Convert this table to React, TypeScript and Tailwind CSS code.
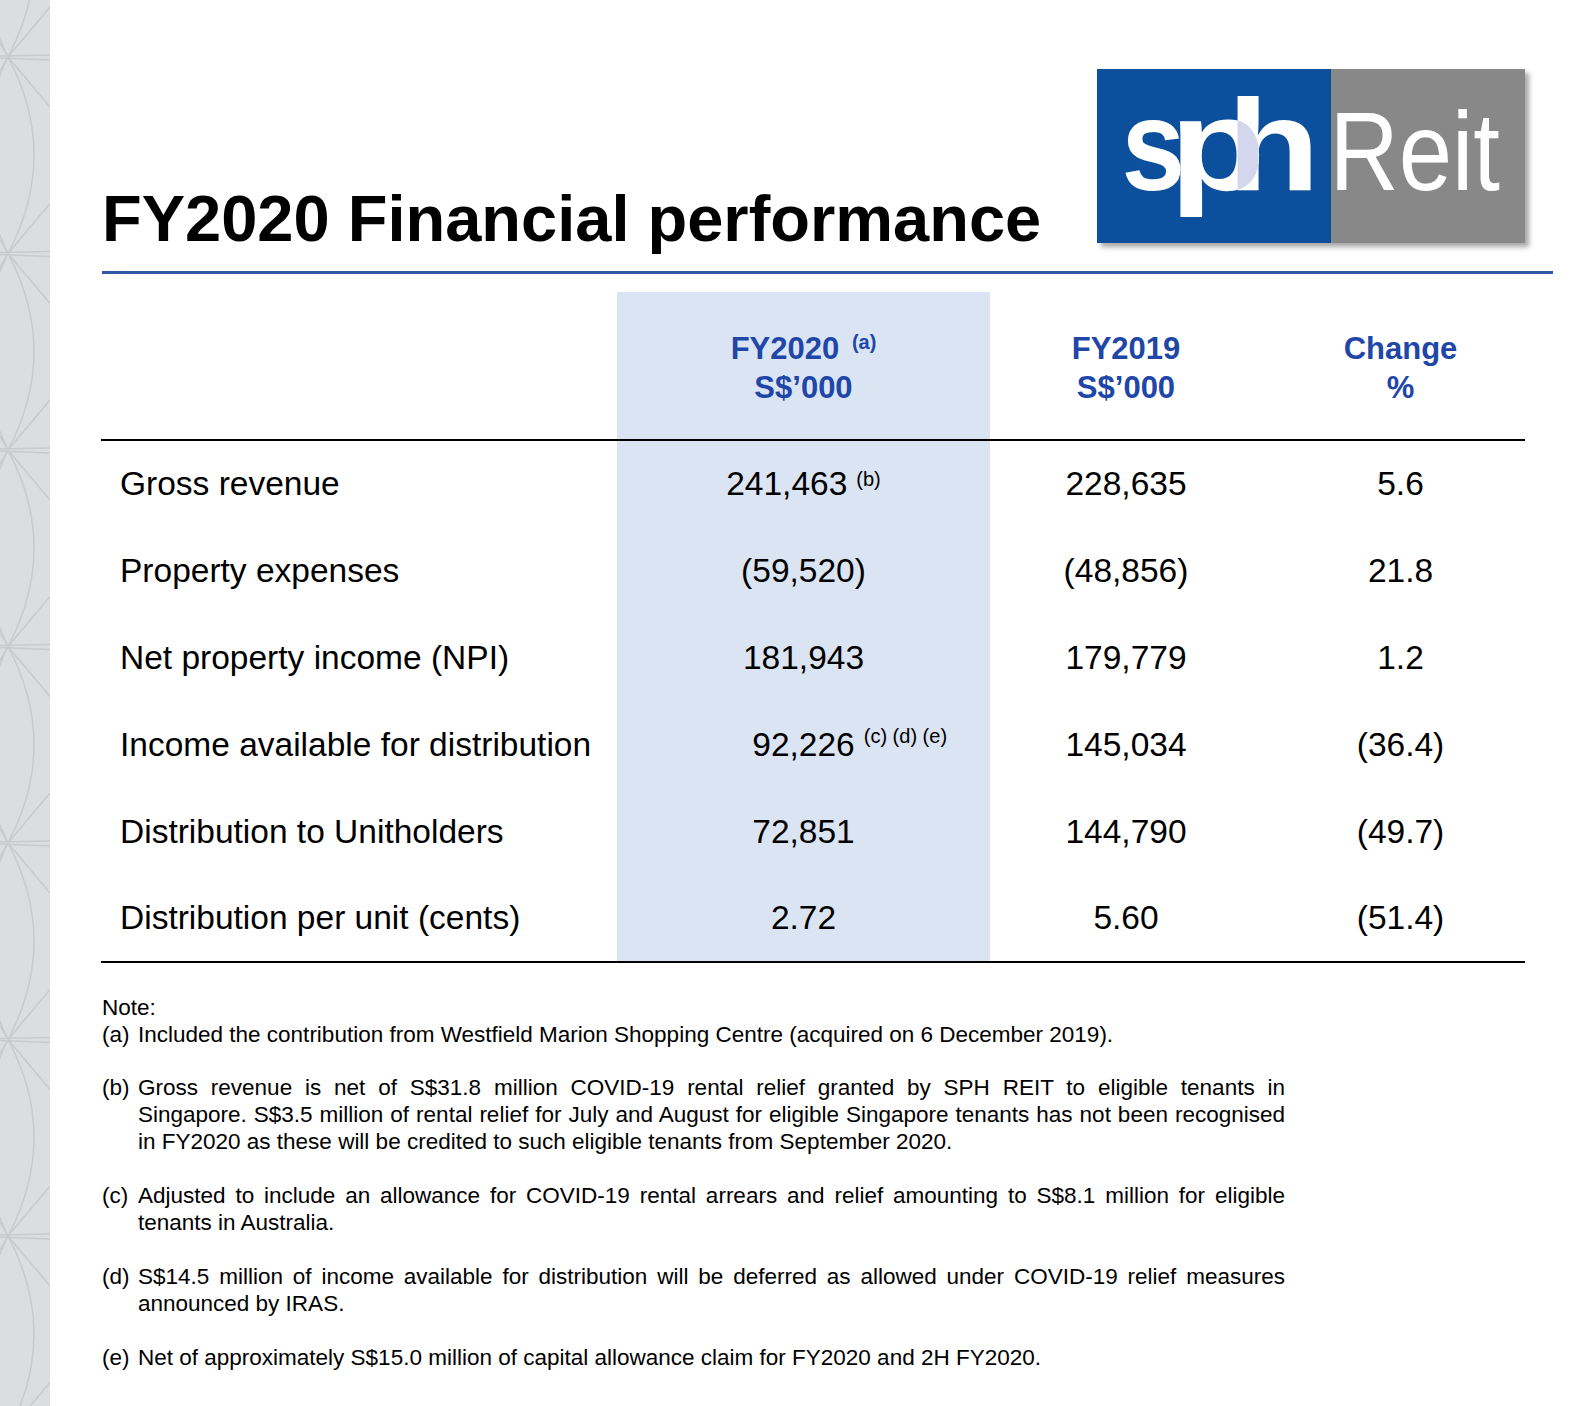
import React from "react";

const FONT = "font-['Liberation_Sans',Arial,sans-serif]";

type Row = {
  label: string;
  fy20: string;
  sup?: string;
  floatSup?: boolean;
  fy19: string;
  change: string;
};

const ROWS: Row[] = [
  { label: "Gross revenue", fy20: "241,463", sup: "(b)", fy19: "228,635", change: "5.6" },
  { label: "Property expenses", fy20: "(59,520)", fy19: "(48,856)", change: "21.8" },
  { label: "Net property income (NPI)", fy20: "181,943", fy19: "179,779", change: "1.2" },
  { label: "Income available for distribution", fy20: "92,226", sup: "(c) (d) (e)", floatSup: true, fy19: "145,034", change: "(36.4)" },
  { label: "Distribution to Unitholders", fy20: "72,851", fy19: "144,790", change: "(49.7)" },
  { label: "Distribution per unit (cents)", fy20: "2.72", fy19: "5.60", change: "(51.4)" },
];

// each note: label + lines (all lines but the last are justified full width)
const NOTES: { tag: string; lines: string[]; gap: string }[] = [
  { tag: "(a)", lines: ["Included the contribution from Westfield Marion Shopping Centre (acquired on 6 December 2019)."], gap: "" },
  {
    tag: "(b)",
    lines: [
      "Gross revenue is net of S$31.8 million COVID-19 rental relief granted by SPH REIT to eligible tenants in",
      "Singapore. S$3.5 million of rental relief for July and August for eligible Singapore tenants has not been recognised",
      "in FY2020 as these will be credited to such eligible tenants from September 2020.",
    ],
    gap: "mt-[26px]",
  },
  {
    tag: "(c)",
    lines: [
      "Adjusted to include an allowance for COVID-19 rental arrears and relief amounting to S$8.1 million for eligible",
      "tenants in Australia.",
    ],
    gap: "mt-[27px]",
  },
  {
    tag: "(d)",
    lines: [
      "S$14.5 million of income available for distribution will be deferred as allowed under COVID-19 relief measures",
      "announced by IRAS.",
    ],
    gap: "mt-[27px]",
  },
  { tag: "(e)", lines: ["Net of approximately S$15.0 million of capital allowance claim for FY2020 and 2H FY2020."], gap: "mt-[27px]" },
];

// ── decorative strip on the left edge ───────────────────────────────────────
function Strip() {
  const nodes = Array.from({ length: 9 }, (_, i) => 57 + (i - 1) * 196.5);
  return (
    <svg width="50" height="1406" className="block shrink-0">
      <rect width="50" height="1406" fill="#dcdde0" />
      <g stroke="#c9cacd" strokeWidth="1.5" fill="none">
        {nodes.map((y) => (
          <g key={y}>
            <path d={`M8 ${y} Q60 ${y + 98} 8 ${y + 196.5}`} />
            <path d={`M8 ${y} Q-40 ${y + 98} 8 ${y + 196.5}`} />
            <line x1="8" y1={y} x2="50" y2={y - 50} />
            <line x1="8" y1={y} x2="50" y2={y + 50} />
            <line x1="0" y1={y - 1} x2="50" y2={y - 2} />
            <line x1="0" y1={y + 1} x2="50" y2={y + 3} />
            <line x1="8" y1={y} x2="0" y2={y - 14} />
            <line x1="8" y1={y} x2="0" y2={y + 14} />
          </g>
        ))}
      </g>
    </svg>
  );
}

// ── SPH REIT logo ──────────────────────────────────────────────────────────
function Logo() {
  const ff = "'Liberation Sans', Arial, sans-serif";
  const pT = "translate(72.6 121) scale(1.21 1)";
  const hT = "translate(130 121) scale(1.17 1)";
  return (
    <svg width="428" height="174" viewBox="0 0 428 174" className="block shadow-[4px_4px_5px_rgba(0,0,0,0.35)]">
      <defs>
        <mask id="pMask" maskUnits="userSpaceOnUse" x="0" y="0" width="428" height="174">
          <rect width="428" height="174" fill="black" />
          <text transform={pT} fill="white" fontFamily={ff} fontWeight="700" fontSize="130">
            p
          </text>
        </mask>
      </defs>
      <rect width="234" height="174" fill="#0b4f9d" />
      <rect x="234" width="194" height="174" fill="#888888" />
      <g fill="#ffffff" fontFamily={ff} fontWeight="700" fontSize="130">
        <text transform="translate(24.5 121) scale(0.88 1)">s</text>
        <text transform={pT}>p</text>
        <text transform={hT}>h</text>
      </g>
      <g mask="url(#pMask)">
        <text transform={hT} fill="#d4d6ee" fontFamily={ff} fontWeight="700" fontSize="130">
          h
        </text>
      </g>
      <text transform="translate(232.5 121) scale(0.856 1)" fill="#ffffff" fontFamily={ff} fontSize="112">
        Reit
      </text>
    </svg>
  );
}

export default function App() {
  const head =
    "h-[149px] pt-[4px] border-b-2 border-black flex flex-col items-center justify-center text-[31px] font-bold leading-[39px] text-[#2046a8]";
  return (
    <div className={`flex w-[1594px] h-[1406px] overflow-hidden bg-white text-black ${FONT}`}>
      <Strip />

      <div className="flex-1 pl-[52px] pr-[41px]">
        {/* Header */}
        <div className="flex items-end justify-between pt-[69px] pr-[28px]">
          <h1 className="text-[65px] font-bold leading-none mb-[-8px]">FY2020 Financial performance</h1>
          <Logo />
        </div>
        <div className="mt-[28px] h-[3px] bg-[#2d5aa5]" />

        {/* Table */}
        <div className="mt-[18px] ml-[-1px] w-[1424px] grid grid-cols-[516px_373px_272px_263px]">
          <div className="h-[149px] border-b-2 border-black" />
          <div className={`${head} bg-[#dbe4f3]`}>
            <div>
              FY2020 <sup className="text-[20px] ml-[4px]">(a)</sup>
            </div>
            <div>S$’000</div>
          </div>
          <div className={head}>
            <div>FY2019</div>
            <div>S$’000</div>
          </div>
          <div className={`${head} pl-[14px]`}>
            <div>Change</div>
            <div>%</div>
          </div>

          {ROWS.map((r, i) => {
            const last = i === ROWS.length - 1 ? "border-b-2 border-black" : "";
            return (
              <React.Fragment key={r.label}>
                <div className={`h-[87px] flex items-center pl-[19px] text-[33.5px] ${last}`}>{r.label}</div>
                <div className={`h-[87px] flex items-center justify-center bg-[#dbe4f3] text-[33.5px] ${last}`}>
                  {r.floatSup ? (
                    <span className="relative">
                      {r.fy20}
                      <sup className="absolute left-full top-[6px] ml-[9px] text-[20px] leading-none whitespace-nowrap">{r.sup}</sup>
                    </span>
                  ) : (
                    <span>
                      {r.fy20}
                      {r.sup && <sup className="text-[20px] top-[-9px] ml-[9px]">{r.sup}</sup>}
                    </span>
                  )}
                </div>
                <div className={`h-[87px] flex items-center justify-center text-[33.5px] ${last}`}>{r.fy19}</div>
                <div className={`h-[87px] flex items-center justify-center pl-[14px] text-[33.5px] ${last}`}>{r.change}</div>
              </React.Fragment>
            );
          })}
        </div>

        {/* Notes */}
        <div className="mt-[31px] w-[1183px] text-[22.5px] leading-[27px]">
          <div>Note:</div>
          {NOTES.map((n) => (
            <div key={n.tag} className={`flex ${n.gap}`}>
              <div className="w-[36px] shrink-0">{n.tag}</div>
              <div className="flex-1">
                {n.lines.map((line, j) => (
                  <div
                    key={j}
                    className={j < n.lines.length - 1 ? "text-justify [text-align-last:justify]" : ""}
                  >
                    {line}
                  </div>
                ))}
              </div>
            </div>
          ))}
        </div>
      </div>
    </div>
  );
}
